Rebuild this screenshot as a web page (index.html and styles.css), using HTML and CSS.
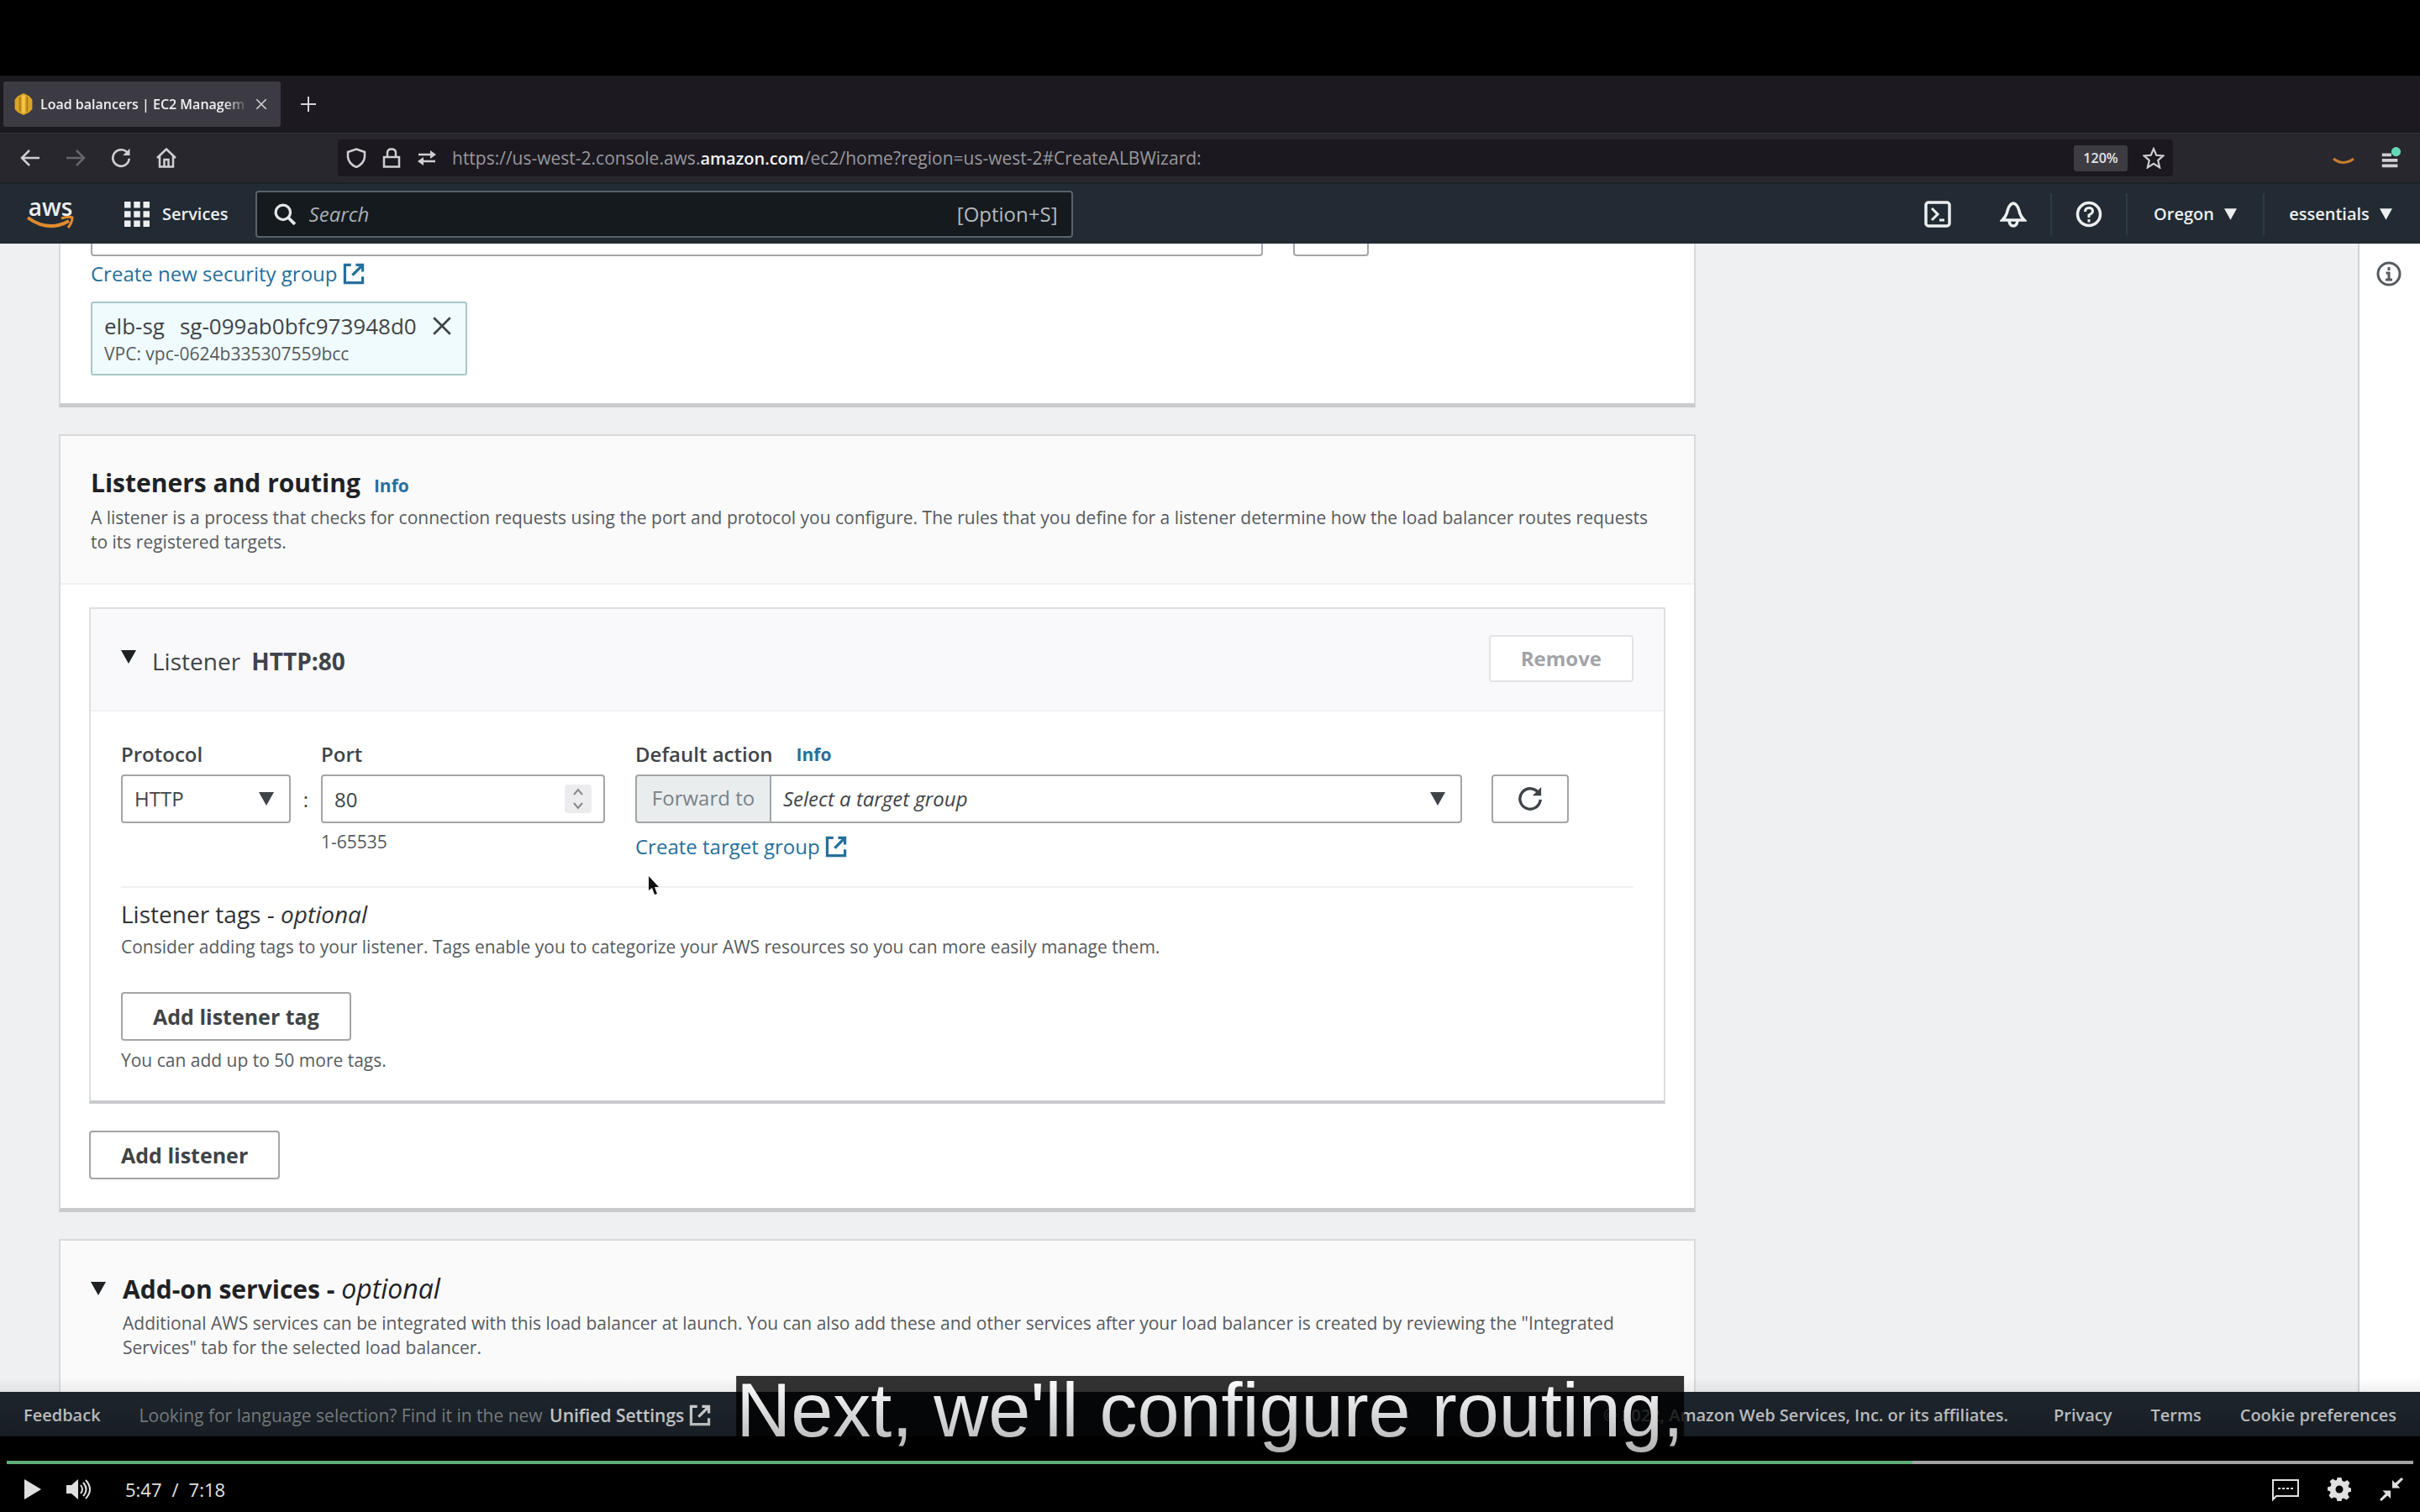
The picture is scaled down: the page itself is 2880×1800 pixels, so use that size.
FILE: index.html
```html
<!DOCTYPE html>
<html lang="en">
<head>
<meta charset="utf-8">
<title>Load balancers | EC2 Management Console</title>
<link rel="stylesheet" href="styles.css">
</head>
<body>
<svg class="sprite" aria-hidden="true">
  <symbol id="external" viewBox="0 0 16 16"><path d="M6 1.5H1.5v13h13V10M9.500 1.500h5v5M14 2 7 9" fill="none" stroke="currentColor" stroke-width="2"/></symbol>
  <symbol id="triangle" viewBox="0 0 18 16"><path d="M0 0h18L9 16z" fill="currentColor"/></symbol>
  <symbol id="reload" viewBox="0 0 16 16"><path d="M13.500 4.500A6.500 6.500 0 1 0 14.500 8.500" fill="none" stroke="currentColor" stroke-width="1.800"/><path d="M15 .5v5.500H9.500z" fill="currentColor"/></symbol>
  <symbol id="cross" viewBox="0 0 16 16"><path d="M1.500 1.500l13 13M14.500 1.500l-13 13" fill="none" stroke="currentColor" stroke-width="1.800"/></symbol>
  <symbol id="smile" viewBox="0 0 56 18"><path d="M1 2q25 18 49 4" fill="none" stroke="currentColor" stroke-width="4"/><path d="M41 3q8-3 13-1 0 6-5 12" fill="none" stroke="currentColor" stroke-width="3"/></symbol>
</svg>
<div class="player">
  <main class="screen">
    <div class="tabs">
      <div class="tab">
        <svg class="favicon" viewBox="0 0 24 30"><path d="M4 4 12 0l8 4 4 5v13l-4 4-8 4-8-4-4-4V9z" fill="#dba524"/><path d="M7 5v20M17 5v20" stroke="#a87a18" stroke-width="2"/><path d="M12 3v24" stroke="#f5c451" stroke-width="4"/></svg>
        <span class="tab-title">Load balancers | EC2 Managem</span>
        <button class="plain" aria-label="Close tab"><svg class="i14"><use href="#cross"/></svg></button>
      </div>
      <button class="plain" aria-label="New tab"><svg class="i18" viewBox="0 0 18 18"><path d="M9 0v18M0 9h18" stroke="currentColor" stroke-width="2"/></svg></button>
    </div>
    <div class="toolbar">
      <div class="history">
        <button class="plain" aria-label="Back"><svg class="i24" viewBox="0 0 24 24"><path d="M23 12H2M11 3l-9 9 9 9" fill="none" stroke="currentColor" stroke-width="2.500"/></svg></button>
        <button class="plain dim" aria-label="Forward"><svg class="i24" viewBox="0 0 24 24"><path d="M1 12h21M13 3l9 9-9 9" fill="none" stroke="currentColor" stroke-width="2.500"/></svg></button>
        <button class="plain" aria-label="Reload"><svg class="i24"><use href="#reload"/></svg></button>
        <button class="plain" aria-label="Home"><svg class="i24" viewBox="0 0 24 24"><path d="M1 12 12 1.500 23 12M4 10v12.500h16V10M9.500 22v-8h5v8" fill="none" stroke="currentColor" stroke-width="2.500"/></svg></button>
      </div>
      <div class="address">
        <svg class="i24" viewBox="0 0 24 24"><path d="M12 1.500 22 5v6q-1 8-10 12Q3 19 2 11V5z" fill="none" stroke="currentColor" stroke-width="2.500"/></svg>
        <svg class="i24" viewBox="0 0 24 24"><path d="M3 11h18v11.500H3zM7 11V6q0-4.500 5-4.500T17 6v5" fill="none" stroke="currentColor" stroke-width="2.500"/></svg>
        <svg class="i24" viewBox="0 0 24 24"><path d="M2 8h15M7 16h15" fill="none" stroke="currentColor" stroke-width="2.500"/><path d="M16 3l7 5-7 5zM8 11l-7 5 7 5z" fill="currentColor"/></svg>
        <span class="url">https://us-west-2.console.aws.<b>amazon.com</b>/ec2/home?region=us-west-2#CreateALBWizard:</span>
        <button class="zoom">120%</button>
        <button class="plain" aria-label="Bookmark"><svg class="i26" viewBox="0 0 24 24"><path d="m12 2 3 7 7.500.6-5.700 5 1.800 7.900-6.600-4.200-6.600 4.200 1.800-7.900-5.700-5L9 9z" fill="none" stroke="currentColor" stroke-width="2"/></svg></button>
      </div>
      <svg class="ext" viewBox="0 0 26 12"><path d="M1 3q12 9 24 0" fill="none" stroke="currentColor" stroke-width="3"/></svg>
      <button class="plain menu" aria-label="Menu"><svg class="i26" viewBox="0 0 26 28"><path d="M2 10h12M2 17h20M2 24h20" stroke="currentColor" stroke-width="4"/><circle cx="20" cy="6" r="6" fill="#62d9b4"/></svg></button>
    </div>
    <nav class="aws">
      <a class="logo" href="#" aria-label="AWS home"><span>aws</span><svg><use href="#smile"/></svg></a>
      <button class="plain services"><svg class="grid" viewBox="0 0 32 32"><path d="M0 0h8v8H0zM12 0h8v8h-8zM24 0h8v8h-8zM0 12h8v8H0zM12 12h8v8h-8zM24 12h8v8h-8zM0 24h8v8H0zM12 24h8v8h-8zM24 24h8v8h-8z" fill="currentColor"/></svg>Services</button>
      <label class="search">
        <svg class="i26" viewBox="0 0 24 24"><circle cx="10" cy="10" r="8" fill="none" stroke="currentColor" stroke-width="3"/><path d="m15 15 8 8" stroke="currentColor" stroke-width="3.500"/></svg>
        <input type="search" placeholder="Search" aria-label="Search">
        <span>[Option+S]</span>
      </label>
      <div class="tools">
        <button class="plain tool shell" aria-label="CloudShell"><svg class="i32" viewBox="0 0 32 32"><rect x="2" y="2" width="28" height="28" rx="3" fill="none" stroke="currentColor" stroke-width="3.500"/><path d="m9 9 7 7-7 7M18 23h6" fill="none" stroke="currentColor" stroke-width="3"/></svg></button>
        <button class="plain tool" aria-label="Notifications"><svg class="i32" viewBox="0 0 32 32"><path d="M3 23q5-5 6-11 2-8 7-9 5 1 7 9 1 6 6 11zM11 24q1 6 5 6t5-6" fill="none" stroke="currentColor" stroke-width="3.500"/></svg></button>
        <button class="plain tool" aria-label="Help"><svg class="i32" viewBox="0 0 32 32"><circle cx="16" cy="16" r="13.500" fill="none" stroke="currentColor" stroke-width="3.500"/><path d="M11.500 13q0-4.500 4.500-4.500t4.500 4q0 2.500-4.500 4.500v3M16 22v3.500" fill="none" stroke="currentColor" stroke-width="3"/></svg></button>
        <button class="plain tool region">Oregon <svg class="tri"><use href="#triangle"/></svg></button>
        <button class="plain tool account">essentials <svg class="tri"><use href="#triangle"/></svg></button>
      </div>
    </nav>
    <div class="page">
      <div class="cards">
        <section class="card groups">
          <div class="row"><select class="box wide" aria-label="Security groups"></select><button class="box square" aria-label="Refresh security groups"></button></div>
          <a class="link" href="#">Create new security group <svg class="i26"><use href="#external"/></svg></a>
          <div class="token">
            <div class="token-name"><span>elb-sg</span><span>sg-099ab0bfc973948d0</span><button class="plain" aria-label="Remove group"><svg class="i24"><use href="#cross"/></svg></button></div>
            <p class="small">VPC: vpc-0624b335307559bcc</p>
          </div>
        </section>
        <section class="card">
          <header class="card-head">
            <h2>Listeners and routing <a class="info" href="#">Info</a></h2>
            <p class="small">A listener is a process that checks for connection requests using the port and protocol you configure. The rules that you define for a listener determine how the load balancer routes requests to its registered targets.</p>
          </header>
          <div class="card-body">
            <section class="listener">
              <header class="listener-head">
                <svg class="tri"><use href="#triangle"/></svg>
                <h3>Listener <b>HTTP:80</b></h3>
                <button class="box btn" disabled>Remove</button>
              </header>
              <div class="listener-body">
                <div class="fields">
                  <div class="field protocol">
                    <label for="protocol">Protocol</label>
                    <div class="pick"><select id="protocol" class="box"><option>HTTP</option></select><svg class="tri"><use href="#triangle"/></svg></div>
                  </div>
                  <span class="colon">:</span>
                  <div class="field port">
                    <label for="port">Port</label>
                    <div class="pick"><input id="port" class="box" type="text" value="80"><span class="spin"><svg viewBox="0 0 30 34"><path d="m10 12 5-6 5 6M10 22l5 6 5-6" fill="none" stroke="#888" stroke-width="2"/></svg></span></div>
                    <p class="small">1-65535</p>
                  </div>
                  <div class="field action">
                    <div class="label-row"><label for="target">Default action</label><a class="info" href="#">Info</a></div>
                    <div class="joined"><span class="prefix">Forward to</span><div class="pick"><select id="target" class="box target"><option>Select a target group</option></select><svg class="tri"><use href="#triangle"/></svg></div></div>
                    <a class="link" href="#">Create target group <svg class="i26"><use href="#external"/></svg></a>
                  </div>
                  <button class="box square" aria-label="Refresh target groups"><svg class="i30"><use href="#reload"/></svg></button>
                </div>
                <div class="tags">
                  <h4>Listener tags - <i>optional</i></h4>
                  <p class="small">Consider adding tags to your listener. Tags enable you to categorize your AWS resources so you can more easily manage them.</p>
                  <button class="box btn">Add listener tag</button>
                  <p class="small">You can add up to 50 more tags.</p>
                </div>
                <svg class="cursor" viewBox="0 0 14 24"><path d="M1 1v17l4-3 3 8 3-1-3-8h5z" fill="#111"/></svg>
              </div>
            </section>
            <button class="box btn">Add listener</button>
          </div>
        </section>
        <section class="card addons">
          <svg class="tri"><use href="#triangle"/></svg>
          <div>
            <h2>Add-on services - <i>optional</i></h2>
            <p class="small">Additional AWS services can be integrated with this load balancer at launch. You can also add these and other services after your load balancer is created by reviewing the "Integrated Services" tab for the selected load balancer.</p>
          </div>
        </section>
      </div>
      <aside class="rail"><button class="plain" aria-label="Info panel"><svg class="i30" viewBox="0 0 30 30"><circle cx="15" cy="15" r="13" fill="none" stroke="currentColor" stroke-width="3"/><path d="M15 7v4M11.500 14H15v8M11 22h8" fill="none" stroke="currentColor" stroke-width="3"/></svg></button></aside>
    </div>
    <footer class="foot">
      <a href="#">Feedback</a>
      <p>Looking for language selection? Find it in the new <a href="#">Unified Settings <svg class="i26"><use href="#external"/></svg></a></p>
      <span class="legal">© 2022, Amazon Web Services, Inc. or its affiliates.</span>
      <a href="#">Privacy</a><a href="#">Terms</a><a href="#">Cookie preferences</a>
    </footer>
    <p class="caption">Next, we'll configure routing,</p>
  </main>
  <div class="controls">
    <input class="progress" type="range" min="0" max="438" value="347" aria-label="Seek">
    <div class="control-row">
      <button class="plain" aria-label="Play"><svg class="play" viewBox="0 0 20 24"><path d="M0 0v24l20-12z" fill="currentColor"/></svg></button>
      <button class="plain volume" aria-label="Volume"><svg class="i30" viewBox="0 0 30 24"><path d="M0 7h6l8-7v24l-8-7H0z" fill="currentColor"/><path d="M17 7q4 5 0 10M20 4q7 8 0 16M23 1q10 11 0 22" fill="none" stroke="currentColor" stroke-width="2"/></svg></button>
      <div class="time"><span>5:47</span><span>/</span><span>7:18</span></div>
      <button class="plain" aria-label="Captions"><svg class="i32" viewBox="0 0 32 24"><path d="M1 1h30v19H5l-4 4z" fill="none" stroke="currentColor" stroke-width="2"/><path d="M7 11h3M12 11h3M17 11h3M22 11h3" stroke="currentColor" stroke-width="2"/></svg></button>
      <button class="plain" aria-label="Settings"><svg class="i28" viewBox="0 0 28 28"><path d="M11.500 0h5l1 4 2.500 1 3.500-2 3 3.500-2 3.500 1 2 3 .5v4l-3.500 1-1 2.500 2 3.500-3.500 3-3.500-2-2 1-.5 2.500h-5l-1-3.500-2.500-1L4.500 25l-3-3.500 2-3.500-1-2-2.500-.5v-4l3.500-1 1-2.500-2-3.500L6 1.500l3.500 2 1.500-.8z" fill="currentColor"/><circle cx="14" cy="14" r="4.500" fill="#000"/></svg></button>
      <button class="plain" aria-label="Exit full screen"><svg class="i28" viewBox="0 0 28 28"><path d="M26 0l2 2-7 7 3.500 3.500H15V3l3.500 3.500zM2 28l-2-2 7-7-3.500-3.500H13V25l-3.500-3.500z" fill="currentColor"/></svg></button>
    </div>
  </div>
</div>
</body>
</html>
```
FILE: styles.css
```css
* { box-sizing: border-box; }
body { margin: 0; background: #000; color: #404448; font: 24px/32px "Open Sans", "Noto Sans", sans-serif; }
h2, h3, h4, p { margin: 0; }
a { color: inherit; text-decoration: none; }
button, input, select { font: inherit; color: inherit; }
svg { flex: none; }
.sprite { position: absolute; width: 0; height: 0; }
.plain { display: flex; align-items: center; padding: 0; border: 0; background: none; }
.i14 { width: 14px; height: 14px; }
.i18 { width: 18px; height: 18px; }
.i24 { width: 24px; height: 24px; }
.i26 { width: 26px; height: 26px; }
.i28 { width: 28px; height: 28px; }
.i30 { width: 30px; height: 30px; }
.i32 { width: 32px; height: 32px; }
.tri { width: 18px; height: 16px; }

.player { display: flex; flex-direction: column; height: 100vh; padding-top: 90px; }
.screen { position: relative; flex: 1; min-height: 0; display: flex; flex-direction: column; background: #eff0f2; }

/* Browser chrome */
.tabs { display: flex; align-items: center; gap: 24px; flex: none; height: 68px; padding: 0 4px; background: #1c1a20; color: #d4d4d6; }
.tab { display: flex; align-items: center; gap: 8px; width: 330px; height: 54px; padding: 0 16px 0 12px; background: #3c3b43; border-radius: 3px; }
.favicon { width: 24px; height: 26px; }
.tab-title { flex: 1; overflow: hidden; white-space: nowrap; font-size: 16px; font-weight: 600; color: #f0f0f2; mask-image: linear-gradient(90deg, #000 88%, transparent); }
.toolbar { display: flex; align-items: center; flex: none; height: 59px; padding: 0 22px 0 24px; background: #29272e; border-top: 1px solid #333138; color: #cfcfd2; }
.history { display: flex; gap: 30px; width: 378px; }
.dim { color: #66656c; }
.address { flex: 1; display: flex; align-items: center; gap: 18px; height: 44px; margin-right: 190px; padding: 0 10px; background: #1b191f; border-radius: 4px; }
.url { flex: 1; font-size: 21px; color: #98979d; white-space: nowrap; }
.url b { font-size: 20px; font-weight: 600; color: #f2f2f4; }
.zoom { width: 64px; height: 31px; padding: 0; border: 0; border-radius: 3px; background: #3d3c43; color: #e3e3e5; font-size: 16px; font-weight: 600; line-height: 31px; }
.ext { width: 26px; height: 12px; margin-top: 8px; color: #c77f2c; }
.menu { margin-left: 30px; }

/* Console navigation */
.aws { display: flex; align-items: center; flex: none; height: 73px; padding: 0 28px 0 32px; background: #222b33; border-top: 2px solid #1a2027; color: #eceef0; font-size: 20px; font-weight: 600; }
.logo { display: flex; flex-direction: column; align-items: center; width: 56px; font-size: 28px; line-height: 22px; }
.logo svg { width: 56px; height: 18px; color: #e08a2e; }
.services { gap: 15px; margin-left: 60px; }
.grid { width: 30px; height: 30px; }
.search { flex: none; display: flex; align-items: center; gap: 16px; width: 34.5%; height: 56px; margin-left: 32px; padding: 0 16px 0 20px; border: 2px solid #59626a; border-radius: 4px; background: #151a1e; font-size: 24px; font-weight: 400; color: #b4b9bd; }
.search input { flex: 1; min-width: 0; padding: 0; border: 0; outline: 0; background: none; }
.search input::placeholder { color: #a9afb3; font-style: italic; opacity: 1; }
.search svg { color: #e4e6e8; }
.tools { display: flex; margin-left: auto; }
.tool { justify-content: center; gap: 12px; width: 90px; height: 50px; border-left: 2px solid #303a44; }
.tool .tri { width: 15px; height: 14px; }
.shell, .shell + .tool { border-color: transparent; }
.region { width: 163px; }
.account { width: 159px; padding-left: 24px; }

/* Page */
.page { flex: 1; min-height: 0; display: flex; justify-content: space-between; overflow: hidden; }
.rail { width: 74px; padding: 21px 0 0 20px; background: #fff; border-left: 2px solid #d3d5d6; color: #565b60; }
.cards { flex: none; width: calc(70% + 2px); padding-left: 70px; display: flex; flex-direction: column; gap: 32px; }
.card { flex: none; background: #fff; border: 2px solid #d9dadc; border-bottom: 5px solid #c9cbcd; }
.groups { padding: 0 36px 33px; border-top: 0; }
.row { display: flex; gap: 36px; margin-top: -43px; }
.wide { width: 74.5%; }
.row .square { width: 90px; }
.link { display: flex; align-items: center; gap: 6px; color: #26709c; font-weight: 500; }
.groups .link { margin-top: 5px; }
.token { display: inline-block; margin-top: 17px; padding: 11px 16px 7px 14px; border: 2px solid #a9c8c8; border-radius: 3px; background: #f0fbfd; }
.token-name { display: flex; gap: 18px; font-size: 26px; font-weight: 500; }
.small { font-size: 21px; line-height: 29px; color: #575b5f; }
.token .small { line-height: 34px; }
.box { height: 58px; border: 2px solid #a3a5a7; border-radius: 4px; background: #fff; padding: 0 14px; margin: 0; }
.square { display: flex; align-items: center; justify-content: center; flex: none; width: 92px; }
.btn { padding: 0 36px; font-size: 25px; font-weight: 700; }
.btn:disabled { height: 56px; border-color: #e2e3e5; color: #a2a4a7; font-size: 24px; }
.card-head { padding: 36px 36px 34px; background: #fafafb; border-bottom: 2px solid #f1f1f3; }
h2 { font-size: 30px; line-height: 40px; font-weight: 700; color: #1f2225; }
h2 i { font-size: 32px; font-weight: 500; }
.card-head h2 { display: flex; align-items: baseline; gap: 16px; }
.card-head .small { margin-top: 4px; }
.info { font-size: 21px; font-weight: 700; color: #26709c; }
.card-body { padding: 27px 36px 34px 34px; }
.listener { margin: 0 -2px 32px 0; border: 2px solid #dedfe1; border-bottom: 4px solid #c9cbcd; }
.listener-head { display: flex; align-items: center; gap: 19px; height: 122px; padding: 0 36px; background: #f9f9fb; border-bottom: 2px solid #f1f1f3; }
.listener-head .tri { color: #1f2225; margin-bottom: 6px; }
.listener-head h3 { flex: 1; padding-top: 3px; font-size: 28px; font-weight: 400; white-space: pre; }
.listener-head b { margin-left: 6px; }
.listener-head .btn { margin-bottom: 2px; }
.listener-body { position: relative; padding: 35px 36px 33px; }
.fields { display: flex; align-items: flex-start; padding-bottom: 31px; border-bottom: 2px solid #f1f1f3; }
.field { display: flex; flex-direction: column; }
.field label { font-weight: 600; }
.field > label, .label-row { margin-bottom: 8px; }
.label-row { display: flex; gap: 28px; }
.pick { display: grid; align-items: center; }
.pick > * { grid-area: 1 / 1; }
.pick .box { width: 100%; appearance: none; font-weight: 500; }
.pick .tri { justify-self: end; margin-right: 20px; pointer-events: none; }
.protocol { width: 202px; }
.colon { width: 36px; margin-top: 54px; text-align: center; }
.port { width: 338px; }
.port .small { margin-top: 8px; }
.spin { justify-self: end; width: 32px; height: 34px; margin-right: 16px; background: #ececee; border-radius: 4px; }
.spin svg { display: block; width: 32px; height: 34px; }
.action { flex: 1; margin-left: 36px; }
.joined { display: flex; }
.joined .pick { flex: 1; }
.prefix { width: 160px; height: 58px; border: 2px solid #a3a5a7; border-right: 0; border-radius: 4px 0 0 4px; background: #e9edee; color: #7c8185; text-align: center; line-height: 52px; }
.joined .target { border-radius: 0 4px 4px 0; font-style: italic; }
.action .link { margin-top: 12px; }
.fields > .square { margin: 40px 77px 0 35px; }
.tags { padding-top: 15px; }
.tags h4 { font-size: 28px; font-weight: 500; color: #2f3235; }
.tags .small { margin-top: 9px; }
.tags .btn { display: block; margin-top: 39px; }
.cursor { position: absolute; left: 663px; top: 194px; width: 14px; height: 26px; }
.addons { display: flex; gap: 20px; padding: 37px 36px 80px; background: #fafafb; }
.addons .tri { margin-top: 12px; color: #1f2225; }
.addons .small { margin-top: 6px; padding-right: 20px; }

.foot { flex: none; display: flex; align-items: center; gap: 46px; height: 53px; padding: 2px 28px 0; background: #1f272f; color: #d9dbdd; font-size: 20px; font-weight: 600; }
.foot p { font-size: 21px; font-weight: 400; color: #8a9095; white-space: nowrap; }
.foot p a { display: inline-flex; align-items: center; gap: 6px; margin-left: 3px; font-size: 21px; font-weight: 600; color: #e3e5e7; }
.legal { margin-left: auto; margin-right: 8px; }

/* Video player overlay */
.caption { position: absolute; z-index: 2; left: 50%; bottom: -30px; transform: translateX(-50%); padding-bottom: 20px; background: rgba(0, 0, 0, .8); color: #fff; font: 90px/82px "Liberation Sans", Arial, sans-serif; white-space: nowrap; }
.controls { position: relative; z-index: 3; flex: none; height: 90px; padding: 29px 8px 0; color: #e0e0e0; }
.controls::before { content: ""; position: absolute; inset: -70px 0 0; background: linear-gradient(transparent, rgba(0, 0, 0, .55)); pointer-events: none; }
.progress { position: relative; display: block; width: 100%; height: 4px; margin: 0; appearance: none; background: linear-gradient(90deg, #5fac76 79.2%, #a3a3a3 79.2%); }
.progress::-webkit-slider-thumb { appearance: none; width: 0; height: 0; }
.control-row { position: relative; display: flex; align-items: center; gap: 34px; height: 59px; padding: 0 12px 0 21px; }
.play { width: 20px; height: 24px; }
.volume { margin-left: -4px; }
.time { flex: 1; display: flex; gap: 12px; margin-left: 6px; font: 22px/32px "Open Sans", sans-serif; }
```
